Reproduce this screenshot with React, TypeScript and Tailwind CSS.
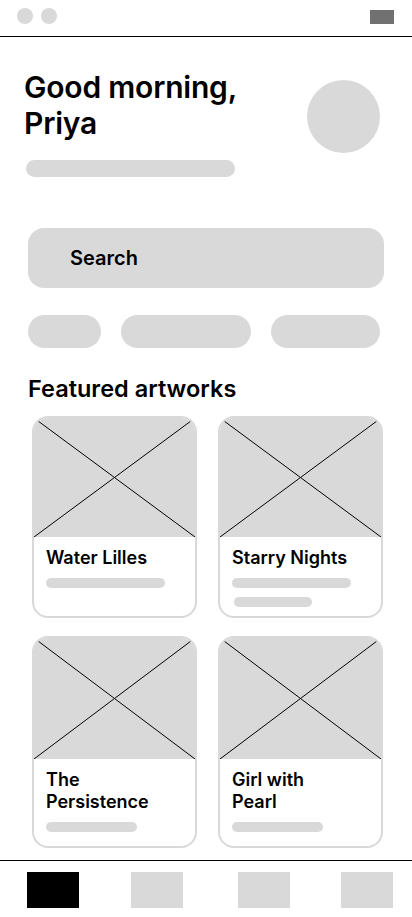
import React from 'react'

const cards = [
  { title: 'Water Lilles', bars: ['w-[119px]'] },
  { title: 'Starry Nights', bars: ['w-[119px]', 'w-[78px] ml-[2px]'] },
  { title: 'The Persistence', bars: ['w-[91px]'], wrap: true },
  { title: 'Girl with Pearl', bars: ['w-[91px]'], wrap: true },
]

function Placeholder({ tall }: { tall?: boolean }) {
  return (
    <div className={`relative w-full bg-[#d9d9d9] ${tall ? 'h-[121px]' : 'h-[119px]'}`}>
      <svg className="absolute inset-0 h-full w-full" preserveAspectRatio="none" viewBox="0 0 100 100">
        <line x1="0" y1="0" x2="100" y2="100" stroke="#000" strokeWidth="1" vectorEffect="non-scaling-stroke" />
        <line x1="100" y1="0" x2="0" y2="100" stroke="#000" strokeWidth="1" vectorEffect="non-scaling-stroke" />
      </svg>
    </div>
  )
}

function ArtCard({ title, bars, wrap }: { title: string; bars: string[]; wrap?: boolean }) {
  return (
    <div className="flex flex-col overflow-hidden rounded-[16px] border-2 border-[#d9d9d9] bg-white">
      <Placeholder tall={wrap} />
      <div className={`flex flex-1 flex-col px-[12px] ${wrap ? 'pt-[10px] pb-[14px]' : 'pt-[10px] pb-[9px]'}`}>
        <h3 className={`text-[18px] font-semibold leading-[22px] text-black ${wrap ? 'max-w-[112px]' : ''}`}>{title}</h3>
        <div className="mt-[9px] flex flex-col gap-[9px]">
          {bars.map((b, i) => (
            <div key={i} className={`h-[10px] rounded-full bg-[#d9d9d9] ${b}`} />
          ))}
        </div>
      </div>
    </div>
  )
}

export default function App() {
  return (
    <div className="flex h-[917px] w-[412px] flex-col overflow-hidden bg-white font-['Inter',sans-serif] text-black">
      {/* Barre fenêtre */}
      <div className="flex h-[37px] shrink-0 items-start justify-between border-b border-black pl-[17px] pr-[18px] pt-[8px]">
        <div className="flex gap-[8px]">
          <span className="h-[16px] w-[16px] rounded-full bg-[#d9d9d9]" />
          <span className="h-[16px] w-[16px] rounded-full bg-[#d9d9d9]" />
        </div>
        <span className="mt-[2px] h-[14px] w-[24px] bg-[#717171]" />
      </div>

      <main className="flex flex-1 flex-col">
        {/* En-tête */}
        <div className="flex items-start justify-between pl-[24px] pr-[32px] pt-[32px]">
          <div className="flex flex-col">
            <h1 className="text-[30px] font-semibold leading-[36px] tracking-[-0.2px]">
              Good morning,
              <br />
              Priya
            </h1>
            <div className="ml-[2px] mt-[19px] h-[17px] w-[209px] rounded-full bg-[#d9d9d9]" />
          </div>
          <div className="mt-[11px] h-[73px] w-[73px] rounded-full bg-[#d9d9d9]" />
        </div>

        {/* Recherche */}
        <div className="mx-[28px] mt-[51px] flex h-[60px] items-center rounded-[16px] bg-[#d9d9d9] pl-[42px]">
          <span className="text-[20px] font-semibold">Search</span>
        </div>

        {/* Filtres */}
        <div className="ml-[28px] mt-[27px] flex gap-[20px]">
          <div className="h-[33px] w-[73px] rounded-full bg-[#d9d9d9]" />
          <div className="h-[33px] w-[130px] rounded-full bg-[#d9d9d9]" />
          <div className="h-[33px] w-[109px] rounded-full bg-[#d9d9d9]" />
        </div>

        {/* Oeuvres */}
        <h2 className="ml-[28px] mt-[27px] text-[23.5px] font-semibold leading-[28px]">Featured artworks</h2>
        <div className="ml-[32px] mr-[29px] mt-[13px] grid grid-cols-2 gap-x-[21px] gap-y-[18px]">
          {cards.map((c) => (
            <ArtCard key={c.title} {...c} />
          ))}
        </div>
      </main>

      {/* Navigation */}
      <nav className="flex h-[57px] shrink-0 items-start border-t border-black pl-[27px] pt-[11px]">
        <span className="h-[36px] w-[52px] bg-black" />
        <span className="ml-[52px] h-[36px] w-[52px] bg-[#d9d9d9]" />
        <span className="ml-[55px] h-[36px] w-[52px] bg-[#d9d9d9]" />
        <span className="ml-[51px] h-[36px] w-[52px] bg-[#d9d9d9]" />
      </nav>
    </div>
  )
}
